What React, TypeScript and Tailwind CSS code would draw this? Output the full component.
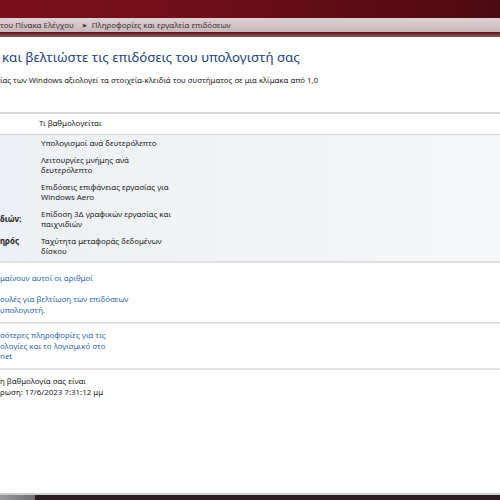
import React from "react";

const font = { fontFamily: '"Noto Sans", "Open Sans", Arial, sans-serif' };

type Row = { label?: string; labelPad?: string; lines: string[] };

const rows: Row[] = [
  { lines: ["Υπολογισμοί ανά δευτερόλεπτο"] },
  { lines: ["Λειτουργίες μνήμης ανά", "δευτερόλεπτο"] },
  { lines: ["Επιδόσεις επιφάνειας εργασίας για", "Windows Aero"] },
  { label: "διών:", labelPad: "pt-[5px]", lines: ["Επίδοση 3Δ γραφικών εργασίας και", "παιχνιδιών"] },
  { label: "ηρός", labelPad: "pt-0", lines: ["Ταχύτητα μεταφοράς δεδομένων", "δίσκου"] },
];

export default function App() {
  return (
    <div className="w-[500px] h-[500px] overflow-hidden bg-white flex flex-col text-[#222]" style={font}>
      {/* window frame top */}
      <div className="h-[18px] shrink-0 bg-gradient-to-r from-[#7c1119] via-[#6a0e16] to-[#4c0a10]" />
      {/* breadcrumb bar */}
      <div className="h-[14px] shrink-0 bg-gradient-to-b from-[#ddd0d3] to-[#c9b8bb] flex items-center text-[7.9px] leading-[14px] text-[#3a3436] whitespace-nowrap">
        <span>του Πίνακα Ελέγχου</span>
        <span className="ml-[9px] mr-[5px] text-[5px]">▶</span>
        <span>Πληροφορίες και εργαλεία επιδόσεων</span>
      </div>
      <div className="h-[5px] shrink-0 bg-gradient-to-b from-[#5e0c12] to-[#8a5a5e]" />

      {/* page content */}
      <div className="flex-1 flex flex-col">
        <div className="pt-[11px] pl-[2px] text-[13.3px] leading-[18px] text-[#23427a] whitespace-nowrap">
          και βελτιώστε τις επιδόσεις του υπολογιστή σας
        </div>
        <div className="mt-[8px] text-[7.8px] leading-[12px] whitespace-nowrap">
          ίας των Windows αξιολογεί τα στοιχεία-κλειδιά του συστήματος σε μια κλίμακα από 1,0
        </div>

        {/* score table */}
        <div className="mt-[26px] border-t-2 border-[#d9d9d9]">
          <div className="h-[20px] flex items-center pl-[39px] text-[7.9px]">Τι βαθμολογείται</div>
          <div className="border-t border-[#d3d3d3] bg-gradient-to-r from-[#edf0f4] via-[#f1f3f6] to-[#f6f7f9] pt-[3px] pb-[5px] flex flex-col gap-[7px]">
            {rows.map((r, i) => (
              <div key={i} className="flex text-[7.9px] leading-[10px]">
                <div className={`w-[41px] shrink-0 font-bold whitespace-nowrap ${r.labelPad ?? ""}`}>{r.label}</div>
                <div className="flex flex-col">
                  {r.lines.map((l, j) => (
                    <span key={j} className="whitespace-nowrap">{l}</span>
                  ))}
                </div>
              </div>
            ))}
          </div>
        </div>

        {/* help links */}
        <div className="border-t-2 border-[#e0e0e0] pt-[10px] pb-[6px] text-[7.9px] leading-[11px] text-[#2b68a6] whitespace-nowrap flex flex-col items-start">
          <span>μαίνουν αυτοί οι αριθμοί</span>
          <span className="mt-[10px]">ουλές για βελτίωση των επιδόσεων</span>
          <span>υπολογιστή.</span>
        </div>
        <div className="border-t-2 border-[#e0e0e0] pt-[6px] pb-[6px] text-[7.9px] leading-[10.5px] text-[#2b68a6] whitespace-nowrap flex flex-col items-start">
          <span>σότερες πληροφορίες για τις</span>
          <span>ολογίες και το λογισμικό στο</span>
          <span>net</span>
        </div>
        <div className="border-t-2 border-[#e0e0e0] pt-[6px] text-[7.9px] leading-[11px] whitespace-nowrap flex flex-col items-start">
          <span>η βαθμολογία σας είναι</span>
          <span>ρωση: 17/6/2023 7:31:12 μμ</span>
        </div>
      </div>

      {/* taskbar edge */}
      <div className="h-[2px] shrink-0 bg-[#cfcfd1]" />
      <div className="h-[5px] shrink-0 flex">
        <div className="w-[35px] bg-gradient-to-r from-[#9a9a9c] to-[#6e6e70]" />
        <div className="flex-1 bg-[#2a1c20]" />
      </div>
    </div>
  );
}
